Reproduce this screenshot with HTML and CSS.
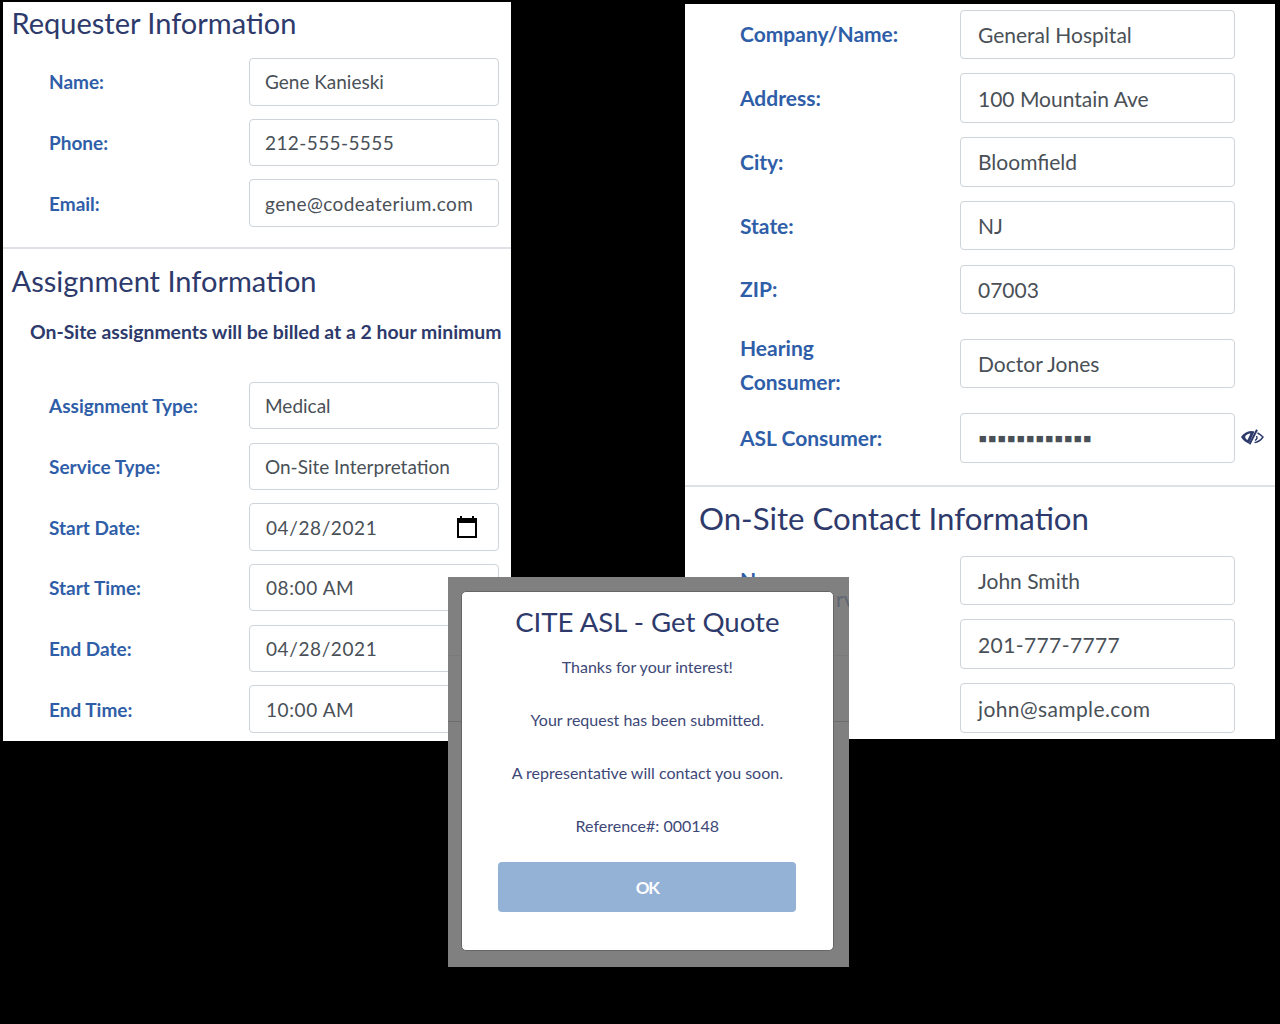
FILE: index.html
```html
<!DOCTYPE html>
<html lang="en">
<head>
    <meta charset="UTF-8">
    <title>CITE ASL - Get Quote</title>
    <link rel="stylesheet" href="styles.css">
</head>
<body>
    <section class="sheet sheet-left">
        <h2 class="section-title">Requester Information</h2>
        <div class="rows rows-first">
            <div class="row"><span class="label">Name:</span><div class="field">Gene Kanieski</div></div>
            <div class="row"><span class="label">Phone:</span><div class="field field-wide">212-555-5555</div></div>
            <div class="row"><span class="label">Email:</span><div class="field field-wide">gene@codeaterium.com</div></div>
        </div>
        <hr class="divider">
        <h2 class="section-title">Assignment Information</h2>
        <p class="note">On-Site assignments will be billed at a 2 hour minimum</p>
        <div class="rows">
            <div class="row"><span class="label">Assignment Type:</span><div class="field">Medical</div></div>
            <div class="row"><span class="label">Service Type:</span><div class="field">On-Site Interpretation</div></div>
            <div class="row"><span class="label">Start Date:</span>
                <div class="field field-date">04/28/2021
                    <svg class="cal-icon" viewBox="0 0 20 22" width="20" height="22"><path d="M4 0v2M16 0v2" stroke="#000" stroke-width="2"/><path d="M1 3h18v18H1z" fill="none" stroke="#000" stroke-width="2"/><path d="M1 3h18v4H1z" fill="#000"/></svg>
                </div>
            </div>
            <div class="row"><span class="label">Start Time:</span><div class="field field-date">08:00 AM</div></div>
            <div class="row"><span class="label">End Date:</span><div class="field field-date">04/28/2021</div></div>
            <div class="row"><span class="label">End Time:</span><div class="field field-date">10:00 AM</div></div>
        </div>
    </section>

    <section class="sheet sheet-right">
        <div class="rows">
            <div class="row"><span class="label">Company/Name:</span><div class="field">General Hospital</div></div>
            <div class="row"><span class="label">Address:</span><div class="field">100 Mountain Ave</div></div>
            <div class="row"><span class="label">City:</span><div class="field">Bloomfield</div></div>
            <div class="row"><span class="label">State:</span><div class="field">NJ</div></div>
            <div class="row"><span class="label">ZIP:</span><div class="field">07003</div></div>
            <div class="row row-tall"><span class="label">Hearing<br>Consumer:</span><div class="field">Doctor Jones</div></div>
            <div class="row"><span class="label">ASL Consumer:</span>
                <div class="field field-secret">▪▪▪▪▪▪▪▪▪▪▪▪</div>
                <svg class="eye-icon" viewBox="0 0 24 16" width="24" height="16">
                    <path d="M1 8C3.500 4.500 7 2 11 2c1.500 0 2.500.2 3.500.6L9 14.500C5.500 13.500 3 11 1 8z" fill="#2d3a6b"/>
                    <path d="M5 8c1-2 3-3.500 5.500-3.500L7.500 11C6.300 10.300 5.500 9.200 5 8z" fill="#fff"/>
                    <path d="M17 .8 9.500 15.200" stroke="#2d3a6b" stroke-width="2"/>
                    <path d="M17.500 4c2 1 3.800 2.400 5.500 4-1.800 2.700-4.800 5-8.500 5.600M16.500 7c.8 1.500.2 3.500-1.500 4.500" fill="none" stroke="#2d3a6b" stroke-width="1.400"/>
                </svg>
            </div>
        </div>
        <hr class="divider">
        <h2 class="section-title">On-Site Contact Information</h2>
        <div class="rows">
            <div class="row"><span class="label">Name:</span><div class="field">John Smith</div></div>
            <!-- these two labels are behind the modal -->
            <div class="row"><span class="label"></span><div class="field field-wide">201-777-7777</div></div>
            <div class="row"><span class="label"></span><div class="field field-wide">john@sample.com</div></div>
        </div>
    </section>

    <div class="backdrop">
        <span class="ghost-text">rv</span>
        <div class="ghost-line ghost-a"></div>
        <div class="ghost-line ghost-b"></div>
        <div class="modal">
            <h2 class="modal-title">CITE ASL - Get Quote</h2>
            <p>Thanks for your interest!</p>
            <p>Your request has been submitted.</p>
            <p>A representative will contact you soon.</p>
            <p class="last-line">Reference#: 000148</p>
            <button class="ok-button">OK</button>
        </div>
    </div>
</body>
</html>
```

FILE: styles.css
```css
* {
    box-sizing: border-box;
    margin: 0;
    padding: 0;
}
html, body {
    height: 100%;
    overflow: hidden;
}
body {
    background-color: #000;
    font-family: "Lato", "Liberation Sans", sans-serif;
    color: #2d3a6b;
}

/* the screenshots sit on a black canvas */
.sheet {
    position: absolute;
    background-color: #fff;
    overflow: hidden;
}
.sheet-left {
    left: 3px;
    top: 2px;
    width: 508px;
    height: 739px;
}
.sheet-right {
    left: 685px;
    top: 4px;
    width: 590px;
    height: 735px;
    padding-top: 5.5px;
}
.section-title {
    font-size: 29px;
    font-weight: 400;
    line-height: 36px;
    padding-left: 8.5px;
}
.sheet-left > .section-title:first-child {
    margin-top: 3px;
}
.sheet-left .divider + .section-title {
    margin-top: 14px;
}
.rows {
    display: flex;
    flex-direction: column;
    gap: 13.2px;
}
.rows-first {
    margin-top: 17px;
}
.row {
    display: flex;
    align-items: center;
    position: relative;
}
.label {
    width: 246px;
    padding-left: 46px;
    font-size: 19px;
    font-weight: 700;
    color: #2f5ea8;
}
.field {
    display: flex;
    align-items: center;
    justify-content: space-between;
    width: 250px;
    height: 47.5px;
    padding: 0 15px;
    border: 1px solid #ced4da;
    border-radius: 4px;
    font-size: 19px;
    color: #495057;
}
.field-wide {
    letter-spacing: 0.4px;
}
.field-date {
    padding-left: 16px;
    letter-spacing: 0.6px;
}
.divider {
    border: 0;
    border-top: 2px solid #dee2e6;
    margin-top: 20px;
}
.note {
    font-size: 19.4px;
    font-weight: 700;
    padding-left: 27px;
    margin-top: 21px;
    margin-bottom: 39px;
    white-space: nowrap;
}
.cal-icon {
    margin-right: 6px;
}

.sheet-right .label {
    width: 275px;
    padding-left: 55px;
    font-size: 21px;
    line-height: 34px;
}
.sheet-right .field {
    width: 275px;
    height: 49.6px;
    padding: 0 17px;
    font-size: 21px;
}
.sheet-right .rows {
    gap: 14.2px;
}
.sheet-right .section-title {
    font-size: 31.2px;
    padding-left: 14px;
    margin-top: 13px;
    margin-bottom: 20px;
}
.sheet-right .divider {
    margin-top: 22px;
}
.row-tall {
    margin-top: -1px;
    margin-bottom: -0.5px;
}
.sheet-right .row-tall .label {
    padding-top: 4px;
}
.sheet-right .field-secret {
    font-size: 23.5px;
}
.eye-icon {
    position: absolute;
    left: 555px;
    top: 16px;
}

/* modal with its gray backdrop */
.backdrop {
    position: absolute;
    left: 448px;
    top: 577px;
    width: 401px;
    height: 390px;
    background-color: #808080;
    overflow: hidden;
}
.ghost-text {
    position: absolute;
    left: 388px;
    top: 9px;
    font-size: 21px;
    color: #5f6672;
}
.ghost-line {
    position: absolute;
    left: 0;
    width: 100%;
    height: 1px;
}
.ghost-a {
    top: 78px;
    background-color: #7a7a7a;
}
.ghost-b {
    top: 144px;
    background-color: #6c6c6c;
}
.modal {
    position: absolute;
    left: 12.7px;
    top: 14px;
    width: 373.3px;
    height: 360px;
    background-color: #fff;
    border: 1px solid #666;
    border-radius: 5px;
    text-align: center;
    padding-top: 11px;
}
.modal-title {
    font-size: 27.6px;
    font-weight: 400;
    line-height: 38px;
    margin-bottom: 14px;
}
.modal p {
    font-size: 16px;
    line-height: 24px;
    margin-bottom: 29px;
    color: #3d4877;
}
.modal .last-line {
    margin-bottom: 24px;
}
.ok-button {
    display: block;
    width: 298px;
    height: 50px;
    margin: 0 auto;
    border: 0;
    border-radius: 4px;
    background-color: #94b1d6;
    color: #fff;
    font-family: inherit;
    font-size: 17px;
    font-weight: 700;
    letter-spacing: -1px;
}
```
